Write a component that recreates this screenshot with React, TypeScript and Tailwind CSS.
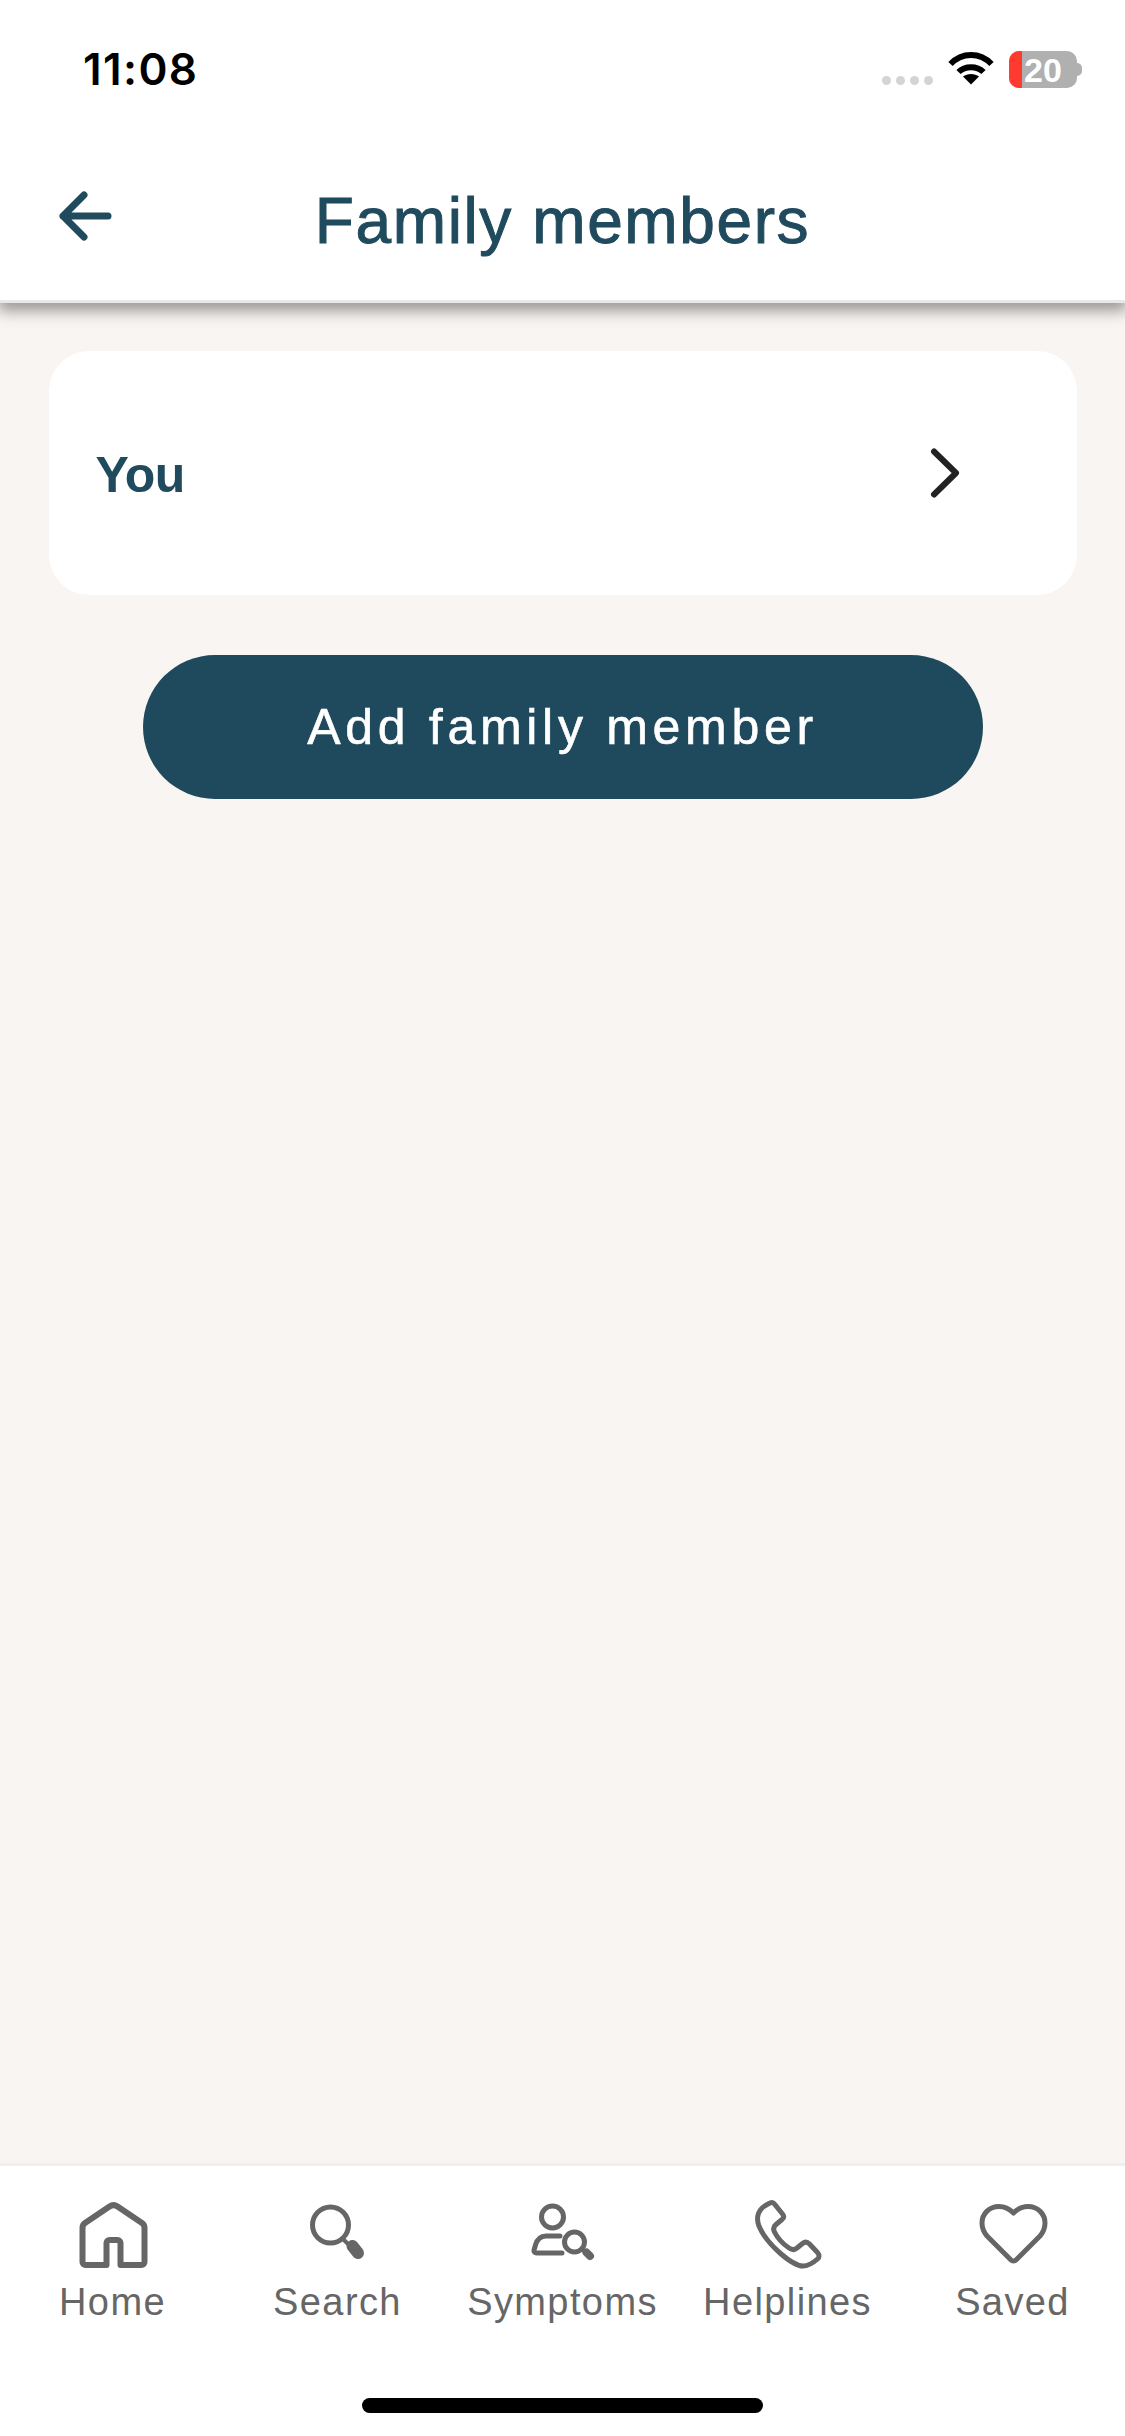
const sans = "font-['Liberation_Sans',Arial,sans-serif]";

function HomeIcon() {
  return (
    <svg width="80" height="72" viewBox="0 0 80 72" fill="none" stroke="#666666" strokeWidth="6" strokeLinejoin="round">
      <path d="M33.5 67 H12.5 a3 3 0 0 1 -3 -3 V30 a6 6 0 0 1 2.5 -5 L36.5 8.5 a7 7 0 0 1 8 0 L69 25 a6 6 0 0 1 2.5 5 V64 a3 3 0 0 1 -3 3 H47.5 V45 a3 3 0 0 0 -3 -3 h-8 a3 3 0 0 0 -3 3 Z" />
    </svg>
  );
}

function SearchIcon() {
  return (
    <svg width="80" height="72" viewBox="0 0 80 72" fill="none" stroke="#666666" strokeLinecap="round">
      <circle cx="32.5" cy="27" r="18" strokeWidth="5" />
      <path d="M45 41 L51 47" strokeWidth="4" />
      <path d="M54.5 48 L60 55" strokeWidth="12" />
    </svg>
  );
}

function SymptomsIcon() {
  return (
    <svg width="80" height="72" viewBox="0 0 80 72" fill="none" stroke="#666666" strokeWidth="5" strokeLinecap="round">
      <circle cx="29.5" cy="19" r="11" />
      <path d="M37 38 H23 C17 38 14 42 12.5 47 L11 52 a2.5 2.5 0 0 0 2.5 3 H39" />
      <circle cx="51.5" cy="44" r="10" />
      <path d="M59 51.5 L64 56" strokeWidth="3.5" />
      <path d="M63.5 54.5 L67 58" strokeWidth="8" />
    </svg>
  );
}

function PhoneIcon() {
  return (
    <svg width="80" height="72" viewBox="0 0 80 72" fill="none" stroke="#666666" strokeWidth="5" strokeLinejoin="round">
      <path d="M21 5.5 C23 4 25 4 26.5 6 L34.5 16 C36 18 36 20 34 21.5 L28 26.5 C25.5 28.5 25 31 26.5 34 C30 41 35 46 41 50 C44 52 47 52 49 50 L54.5 45.5 C57 43.5 59.5 44 61.5 46 L69.5 54.5 C71.5 57 71.5 59.5 69.5 61 C65 65 61 68 55 68 C48 68 40 62 32.5 55.5 C24 48 15 38 11 28 C8 20 9 11 21 5.5 Z" />
    </svg>
  );
}

function HeartIcon() {
  return (
    <svg width="80" height="72" viewBox="0 0 80 72" fill="none" stroke="#666666" strokeWidth="5" strokeLinejoin="round">
      <path d="M40.5 15 C36 10.5 31 8.5 26 8.5 C16 8.5 9 16 9 25 C9 30 11 34.5 14 38 L38 62 a3.5 3.5 0 0 0 5 0 L67 38 C70 34.5 72 30 72 25 C72 16 65 8.5 55 8.5 C50 8.5 45 10.5 40.5 15 Z" />
    </svg>
  );
}

const tabs = [
  { label: "Home", icon: <HomeIcon /> },
  { label: "Search", icon: <SearchIcon /> },
  { label: "Symptoms", icon: <SymptomsIcon /> },
  { label: "Helplines", icon: <PhoneIcon /> },
  { label: "Saved", icon: <HeartIcon /> },
];

function StatusBar() {
  return (
    <div className="flex h-[138px] items-start justify-between pl-[83px] pr-[43px] pt-[44px]">
      <span className="font-['Inter',sans-serif] text-[44px] font-semibold leading-[50px] tracking-[1.4px] text-black">11:08</span>
      <div className="flex items-start pt-[7px]">
        {/* Signal dots */}
        <div className="mt-[25px] flex gap-[5px]">
          <div className="h-[9px] w-[9px] rounded-full bg-[#d4d4d4]" />
          <div className="h-[9px] w-[9px] rounded-full bg-[#d4d4d4]" />
          <div className="h-[9px] w-[9px] rounded-full bg-[#d4d4d4]" />
          <div className="h-[9px] w-[9px] rounded-full bg-[#d4d4d4]" />
        </div>
        {/* Wifi */}
        <svg className="ml-[15px]" width="46" height="34" viewBox="0 0 46 34" fill="none" stroke="#000000" strokeWidth="6">
          <path d="M2.5 13 C14 1 32 1 43.5 13" />
          <path d="M10.5 21 C17 14.5 29 14.5 35.5 21" />
          <path d="M23 33.5 L15 25.5 C19 22 27 22 31 25.5 Z" fill="#000000" stroke="none" />
        </svg>
        {/* Battery */}
        <div className="ml-[15px] flex items-center">
          <div className="relative flex h-[37px] w-[68px] items-center justify-center rounded-[10px] bg-[#b0b0b0]">
            <div className="absolute inset-y-0 left-0 w-[13px] rounded-l-[10px] bg-[#ff3b30]" />
            <span className={`relative ${sans} text-[34px] font-bold leading-none text-white`}>20</span>
          </div>
          <div className="h-[13px] w-[5px] rounded-r-full bg-[#b0b0b0]" />
        </div>
      </div>
    </div>
  );
}

export default function App() {
  return (
    <div className={`flex h-[2436px] w-[1125px] flex-col bg-[#f8f5f2] ${sans}`}>
      <header className="relative z-10 h-[303px] border-b-[3px] border-[#e8e8e8] bg-white shadow-[0_6px_14px_2px_rgba(0,0,0,0.38)]">
        <StatusBar />
        <div className="relative flex h-[162px] items-center justify-center pt-[4px]">
          <svg className="absolute left-[55px] top-[50px]" width="62" height="58" viewBox="0 0 62 58" fill="none" stroke="#204a5d" strokeWidth="7" strokeLinecap="round" strokeLinejoin="round">
            <path d="M29 7 L8 28 L29 49 M8 28 H53" />
          </svg>
          <h1 className="text-[64px] font-normal leading-none tracking-[1.6px] text-[#204a5d] [-webkit-text-stroke:1px_#204a5d]">
            Family members
          </h1>
        </div>
      </header>

      <main className="flex flex-1 flex-col items-center pt-[48px]">
        <div className="flex h-[244px] w-[1028px] items-center justify-between rounded-[40px] bg-white pl-[47px] pr-[117px]">
          <span className="pt-[4px] text-[50px] font-bold leading-none tracking-[-0.5px] text-[#204a5d]">You</span>
          <svg width="30" height="50" viewBox="0 0 30 50" fill="none" stroke="#222222" strokeWidth="6" strokeLinecap="round" strokeLinejoin="round">
            <path d="M4 3.5 L26 25 L4 46.5" />
          </svg>
        </div>
        <button className="mt-[60px] flex h-[144px] w-[840px] items-center justify-center rounded-full bg-[#1f495c] text-[50px] leading-none tracking-[4.7px] text-white [-webkit-text-stroke:0.6px_#ffffff]">
          Add family member
        </button>
      </main>

      <nav className="h-[273px] border-t-[3px] border-[#efefef] bg-white">
        <div className="grid grid-cols-5 pt-[32px]">
          {tabs.map((tab) => (
            <div key={tab.label} className="flex flex-col items-center">
              {tab.icon}
              <span className="mt-[10px] text-[38px] leading-[44px] tracking-[1.4px] text-[#666666]">{tab.label}</span>
            </div>
          ))}
        </div>
        <div className="mx-auto mt-[74px] h-[15px] w-[401px] rounded-full bg-black" />
      </nav>
    </div>
  );
}
